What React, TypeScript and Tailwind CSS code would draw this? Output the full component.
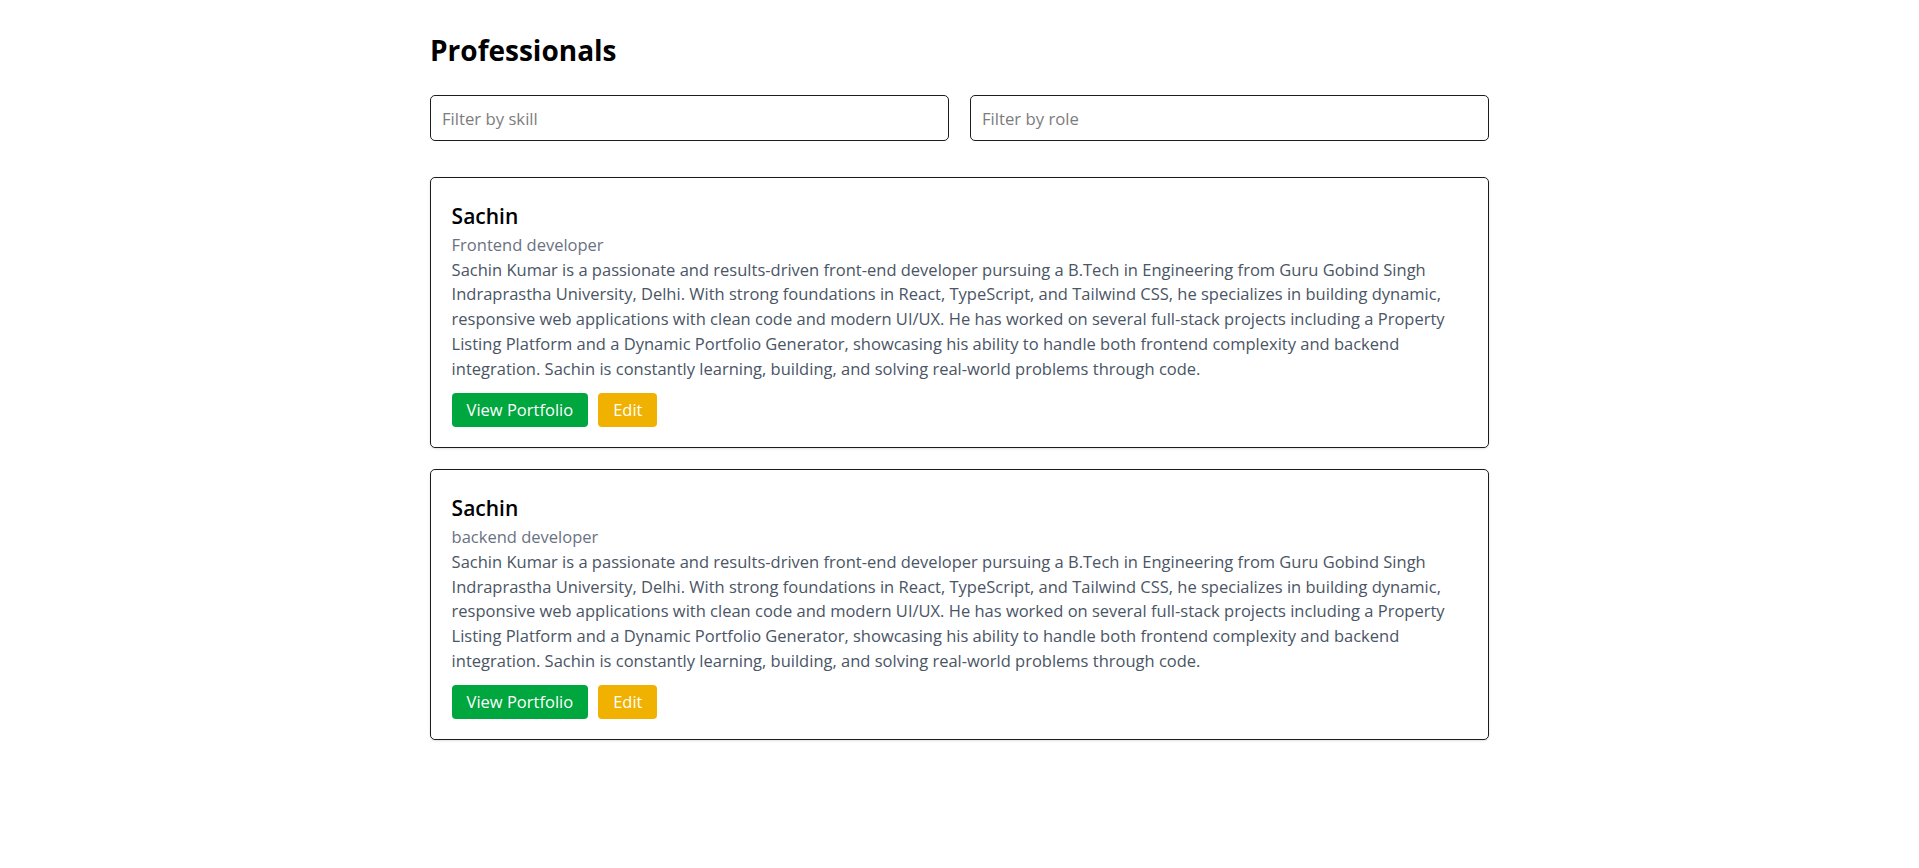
import { useState } from "react";

interface Professional {
  id: number;
  name: string;
  role: string;
  bio: string;
}

const bio =
  "Sachin Kumar is a passionate and results-driven front-end developer pursuing a B.Tech in Engineering from Guru Gobind Singh Indraprastha University, Delhi. With strong foundations in React, TypeScript, and Tailwind CSS, he specializes in building dynamic, responsive web applications with clean code and modern UI/UX. He has worked on several full-stack projects including a Property Listing Platform and a Dynamic Portfolio Generator, showcasing his ability to handle both frontend complexity and backend integration. Sachin is constantly learning, building, and solving real-world problems through code.";

const professionals: Professional[] = [
  { id: 1, name: "Sachin", role: "Frontend developer", bio },
  { id: 2, name: "Sachin", role: "backend developer", bio },
];

const App = () => {
  const [skill, setSkill] = useState("");
  const [role, setRole] = useState("");

  const filtered = professionals.filter(
    (p) =>
      p.bio.toLowerCase().includes(skill.toLowerCase()) &&
      p.role.toLowerCase().includes(role.toLowerCase())
  );

  return (
    <div className="min-h-screen bg-white font-['Open_Sans',sans-serif]">
      <div className="w-[1059px] mx-auto pt-[30px]">
        <h1 className="text-[28px] leading-[40px] font-bold text-black mb-[25px]">
          Professionals
        </h1>

        <div className="grid grid-cols-2 gap-[21px] mb-[36px]">
          <input
            value={skill}
            onChange={(e) => setSkill(e.target.value)}
            placeholder="Filter by skill"
            className="h-[46px] border border-[#1c1c1c] rounded-[5px] px-[11px] text-[16.7px] text-gray-800 placeholder:text-[#7d7d7d] outline-none"
          />
          <input
            value={role}
            onChange={(e) => setRole(e.target.value)}
            placeholder="Filter by role"
            className="h-[46px] border border-[#1c1c1c] rounded-[5px] px-[11px] text-[16.7px] text-gray-800 placeholder:text-[#7d7d7d] outline-none"
          />
        </div>

        <div className="flex flex-col gap-[21px]">
          {filtered.map((item) => (
            <div
              key={item.id}
              className="border border-[#1c1c1c] rounded-[5px] shadow-sm px-[20.6px] pt-[20.6px] pb-[20px]"
            >
              <h2 className="text-[21px] leading-[34.4px] font-semibold text-black">
                {item.name}
              </h2>
              <p className="text-[16.5px] leading-[24.7px] text-[#6a7282]">
                {item.role}
              </p>
              <p className="text-[16.5px] leading-[24.7px] text-[#4a5565]">
                {item.bio}
              </p>
              <div className="flex gap-[10px] mt-[11.7px]">
                <button className="h-[34.3px] px-[15px] rounded bg-[#00a63e] text-white text-[16.5px]">
                  View Portfolio
                </button>
                <button className="h-[34.3px] px-[15px] rounded bg-[#f0b100] text-white text-[16.5px]">
                  Edit
                </button>
              </div>
            </div>
          ))}
        </div>
      </div>
    </div>
  );
};

export default App;
